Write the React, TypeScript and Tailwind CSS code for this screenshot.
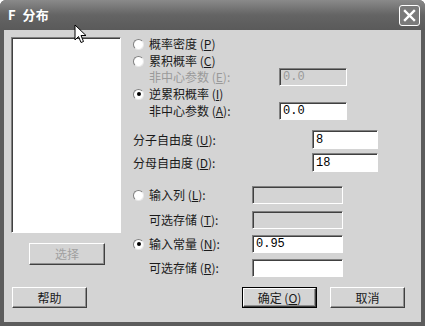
import React from 'react';

const font = { fontFamily: '"Noto Sans CJK SC", "Noto Sans", sans-serif' };

const Radio: React.FC<{ checked?: boolean }> = ({ checked }) => (
    <span className="w-[11px] h-[11px] rounded-full bg-white border border-t-[#808080] border-l-[#808080] border-b-[#e8e8e8] border-r-[#e8e8e8] flex items-center justify-center shrink-0">
        {checked && <span className="w-[4px] h-[4px] rounded-full bg-black" />}
    </span>
);

const Field: React.FC<{ value?: string; disabled?: boolean; className?: string }> = ({ value, disabled, className }) => (
    <div
        className={`h-full border border-t-[#808080] border-l-[#808080] border-b-white border-r-white shadow-[inset_1px_1px_0_#404040] flex items-center pl-[3px] text-[12px] ${disabled ? 'bg-[#d4d4d4] text-[#9a9a9a]' : 'bg-white text-black'} ${className ?? ''}`}
        style={{ fontFamily: '"Liberation Mono", monospace' }}
    >
        {value}
    </div>
);

const Button: React.FC<{ label: React.ReactNode; disabled?: boolean; primary?: boolean; className?: string }> = ({ label, disabled, primary, className }) => (
    <div className={`h-[21px] ${primary ? 'border border-black' : ''} ${className ?? ''}`}>
        <div className="h-full border border-t-white border-l-white border-b-[#404040] border-r-[#404040] shadow-[inset_-1px_-1px_0_#909090] bg-[#d4d4d4] flex items-center justify-center">
            <span className={`text-[12px] ${disabled ? 'text-[#a0a0a0]' : 'text-[#1a1a1a]'}`}>{label}</span>
        </div>
    </div>
);

const Label: React.FC<{ text: string; k: string; colon?: boolean; disabled?: boolean; className?: string }> = ({ text, k, colon, disabled, className }) => (
    <span className={`text-[12px] leading-none whitespace-nowrap ${disabled ? 'text-[#9a9a9a]' : 'text-[#1a1a1a]'} ${className ?? ''}`}>
        {text} (<u>{k}</u>){colon ? ':' : ''}
    </span>
);

const App: React.FC = () => {
    return (
        <div className="w-[425px] h-[326px] bg-[#5c5c5c] flex flex-col relative overflow-hidden rounded-t-[6px]" style={font}>
            {/* title bar */}
            <div className="h-[30px] shrink-0 bg-gradient-to-b from-[#8a8a8a] via-[#646464] to-[#5a5a5a] flex items-center justify-between pl-[8px] pr-[5px]">
                <span className="text-white font-bold text-[13px] tracking-wide">F&nbsp;&nbsp;分布</span>
                <div className="w-[21px] h-[21px] rounded-[3px] border border-white bg-[#7a7a7a] flex items-center justify-center">
                    <svg width="13" height="13" viewBox="0 0 13 13">
                        <path d="M2 2 L11 11 M11 2 L2 11" stroke="white" strokeWidth="2.4" strokeLinecap="square" />
                    </svg>
                </div>
            </div>

            {/* body */}
            <div className="flex-1 mx-[4px] mb-[4px] bg-[#d4d4d4] flex flex-col">
                <div className="flex">
                    {/* left column */}
                    <div className="pl-[7px] pt-[7px] w-[127px] shrink-0 flex flex-col">
                        <div className="w-[110px] h-[196px] bg-white border border-t-[#808080] border-l-[#808080] border-b-white border-r-white shadow-[inset_1px_1px_0_#404040]" />
                        <Button label="选择" disabled className="w-[76px] mt-[10px] ml-[18px] h-[22px]" />
                    </div>

                    {/* right column */}
                    <div className="flex flex-col pt-[5px] pl-[2px]">
                        <div className="h-[18px] flex items-center gap-[5px]">
                            <Radio />
                            <Label text="概率密度" k="P" />
                        </div>
                        <div className="h-[18px] mt-[-1px] flex items-center gap-[5px]">
                            <Radio />
                            <Label text="累积概率" k="C" />
                        </div>
                        <div className="h-[18px] mt-[-2px] flex items-center">
                            <Label text="非中心参数" k="E" colon disabled className="pl-[16px] w-[146px]" />
                            <Field value="0.0" disabled className="w-[68px]" />
                        </div>
                        <div className="h-[18px] mt-[-1px] flex items-center gap-[5px]">
                            <Radio checked />
                            <Label text="逆累积概率" k="I" />
                        </div>
                        <div className="h-[18px] mt-[-1px] flex items-center">
                            <Label text="非中心参数" k="A" colon className="pl-[16px] w-[146px]" />
                            <Field value="0.0" className="w-[68px]" />
                        </div>

                        <div className="h-[19px] mt-[10px] flex items-center">
                            <span className="w-[179px] text-[12px] text-[#1a1a1a]">分子自由度 (<u>U</u>):</span>
                            <Field value="8" className="w-[66px]" />
                        </div>
                        <div className="h-[19px] mt-[4px] flex items-center">
                            <span className="w-[179px] text-[12px] text-[#1a1a1a]">分母自由度 (<u>D</u>):</span>
                            <Field value="18" className="w-[66px]" />
                        </div>

                        <div className="h-[18px] mt-[14px] flex items-center">
                            <div className="w-[119px] flex items-center gap-[5px]">
                                <Radio />
                                <span className="text-[12px] text-[#1a1a1a]">输入列 (<u>L</u>):</span>
                            </div>
                            <Field disabled className="w-[91px]" />
                        </div>
                        <div className="h-[18px] mt-[7px] flex items-center">
                            <span className="w-[119px] pl-[16px] text-[12px] text-[#1a1a1a]">可选存储 (<u>T</u>):</span>
                            <Field disabled className="w-[91px]" />
                        </div>
                        <div className="h-[18px] mt-[6px] flex items-center">
                            <div className="w-[119px] flex items-center gap-[5px]">
                                <Radio checked />
                                <span className="text-[12px] text-[#1a1a1a]">输入常量 (<u>N</u>):</span>
                            </div>
                            <Field value="0.95" className="w-[91px]" />
                        </div>
                        <div className="h-[18px] mt-[6px] flex items-center">
                            <span className="w-[119px] pl-[16px] text-[12px] text-[#1a1a1a]">可选存储 (<u>R</u>):</span>
                            <Field className="w-[91px]" />
                        </div>
                    </div>
                </div>

                {/* bottom buttons */}
                <div className="flex items-center mt-[10px] pl-[8px]">
                    <Button label="帮助" className="w-[75px]" />
                    <Button label={<>确定 (<u>O</u>)</>} primary className="w-[75px] ml-[155px]" />
                    <Button label="取消" className="w-[75px] ml-[13px]" />
                </div>
            </div>

            {/* mouse cursor */}
            <svg className="absolute left-[74px] top-[24px]" width="14" height="21" viewBox="0 0 14 21">
                <path d="M1 1 L1 16 L4.5 12.5 L7 18.5 L9.5 17.5 L7 11.5 L12 11.5 Z" fill="white" stroke="black" strokeWidth="1" strokeLinejoin="round" />
            </svg>
        </div>
    );
};

export default App;
